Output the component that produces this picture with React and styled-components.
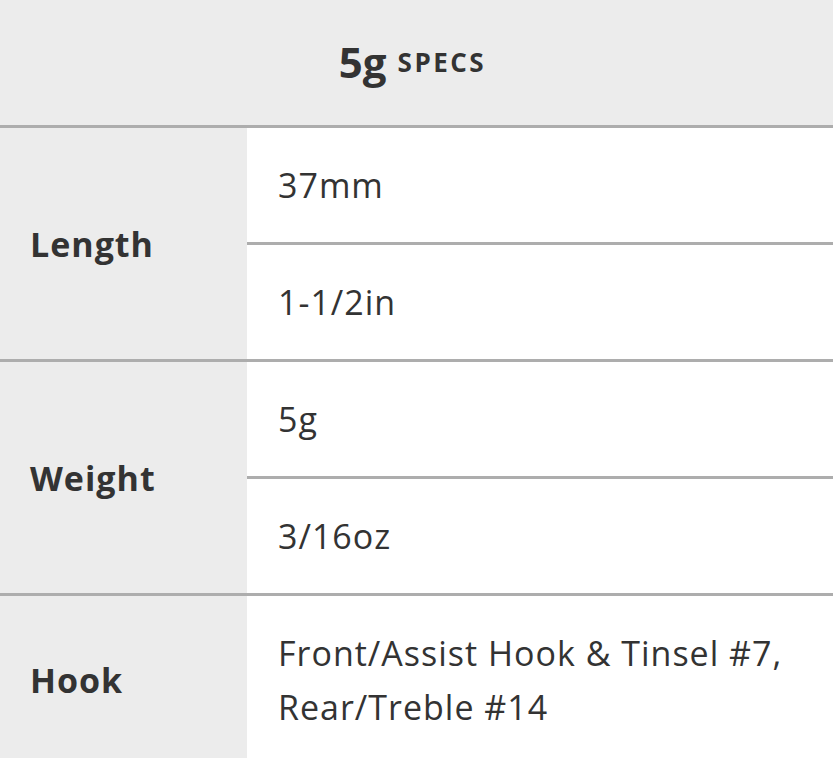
import React from 'react';
import styled, { createGlobalStyle } from 'styled-components';

const GlobalStyle = createGlobalStyle`
  html, body {
    margin: 0;
    padding: 0;
    background: #fff;
  }
  body {
    font-family: "Open Sans", "Liberation Sans", sans-serif;
    color: #333;
  }
`;

const specs = [
    { label: 'Length', values: ['37mm', '1-1/2in'] },
    { label: 'Weight', values: ['5g', '3/16oz'] },
    { label: 'Hook', values: ['Front/Assist Hook & Tinsel #7, Rear/Treble #14'] },
];

function App() {
    return (
        <>
            <GlobalStyle />
            <SpecTable>
                <Caption>
                    <Big>5g</Big> <Small>Specs</Small>
                </Caption>
                {specs.map((spec) => (
                    <Group key={spec.label}>
                        <Label>{spec.label}</Label>
                        <Values>
                            {spec.values.map((v) => (
                                <Value key={v}>{v}</Value>
                            ))}
                        </Values>
                    </Group>
                ))}
            </SpecTable>
        </>
    );
}
export default App;

const SpecTable = styled.div`
  width: 100%;
  display: flex;
  flex-direction: column;
`;

const Caption = styled.div`
  height: 125px;
  background: #ececec;
  display: flex;
  align-items: center;
  justify-content: center;
  font-weight: 700;
  color: #333;
  padding-bottom: 2px;
  padding-right: 8px;
  box-sizing: border-box;
`;

const Big = styled.span`
  font-size: 42px;
  margin-right: 11px;
`;

const Small = styled.span`
  font-size: 26px;
  letter-spacing: 2.5px;
  text-transform: uppercase;
`;

const Group = styled.div`
  display: grid;
  grid-template-columns: 247px 1fr;
  border-top: 3px solid #adadad;
`;

const Label = styled.div`
  background: #ececec;
  display: flex;
  align-items: center;
  padding-left: 30px;
  font-size: 34px;
  letter-spacing: 1px;
  font-weight: 700;
  color: #333;
`;

const Values = styled.div`
  display: flex;
  flex-direction: column;
`;

const Value = styled.div`
  padding: 30px 20px 30px 31px;
  font-size: 34px;
  letter-spacing: 1px;
  line-height: 54px;
  color: #333;
  & + & {
    border-top: 3px solid #adadad;
  }
`;
